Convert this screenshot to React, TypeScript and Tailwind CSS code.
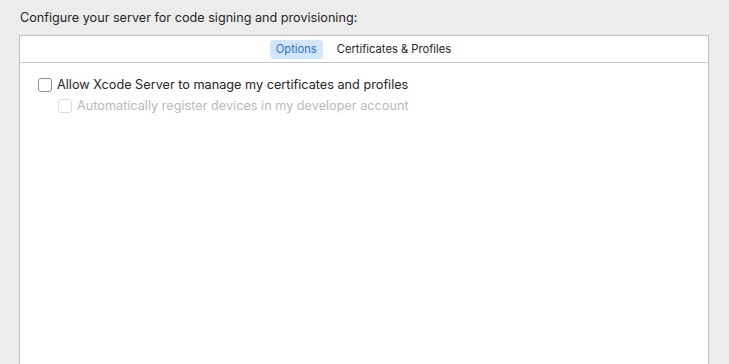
import React from 'react';

function Checkbox({ disabled }: { disabled?: boolean }) {
  return (
    <span
      className={
        'inline-block w-[14px] h-[14px] rounded-[3px] border bg-white shrink-0 ' +
        (disabled ? 'border-[#dcdcdc]' : 'border-[#8e8e8e]')
      }
    />
  );
}

export default function App() {
  return (
    <div
      className="w-[729px] h-[364px] overflow-hidden bg-[#ececec] flex flex-col"
      style={{ fontFamily: 'Inter, "Noto Sans", sans-serif' }}
    >
      <p className="pl-[20px] pt-[10px] h-[35px] text-[12.65px] leading-[16px] text-[#262626]">
        Configure your server for code signing and provisioning:
      </p>
      <div className="ml-[19px] w-[690px] flex-1 bg-white border border-[#bdbdbd] border-b-0 flex flex-col">
        <div className="h-[27px] border-b border-[#c8c8c8] flex items-center justify-center pr-[7px] gap-[14px] text-[11.2px]">
          <span className="h-[19px] px-[6px] flex items-center rounded-[4px] bg-[#d4e6fb] text-[#2a73d4]">
            Options
          </span>
          <span className="text-[#262626]">Certificates &amp; Profiles</span>
        </div>
        <div className="pt-[14px] pl-[18px] flex flex-col gap-[6px]">
          <label className="flex items-center gap-[5px] text-[12.7px] leading-[15px] text-[#262626]">
            <Checkbox />
            Allow Xcode Server to manage my certificates and profiles
          </label>
          <label className="flex items-center gap-[5px] pl-[20px] text-[12.7px] leading-[15px] text-[#b9b9b9]">
            <Checkbox disabled />
            Automatically register devices in my developer account
          </label>
        </div>
      </div>
    </div>
  );
}
